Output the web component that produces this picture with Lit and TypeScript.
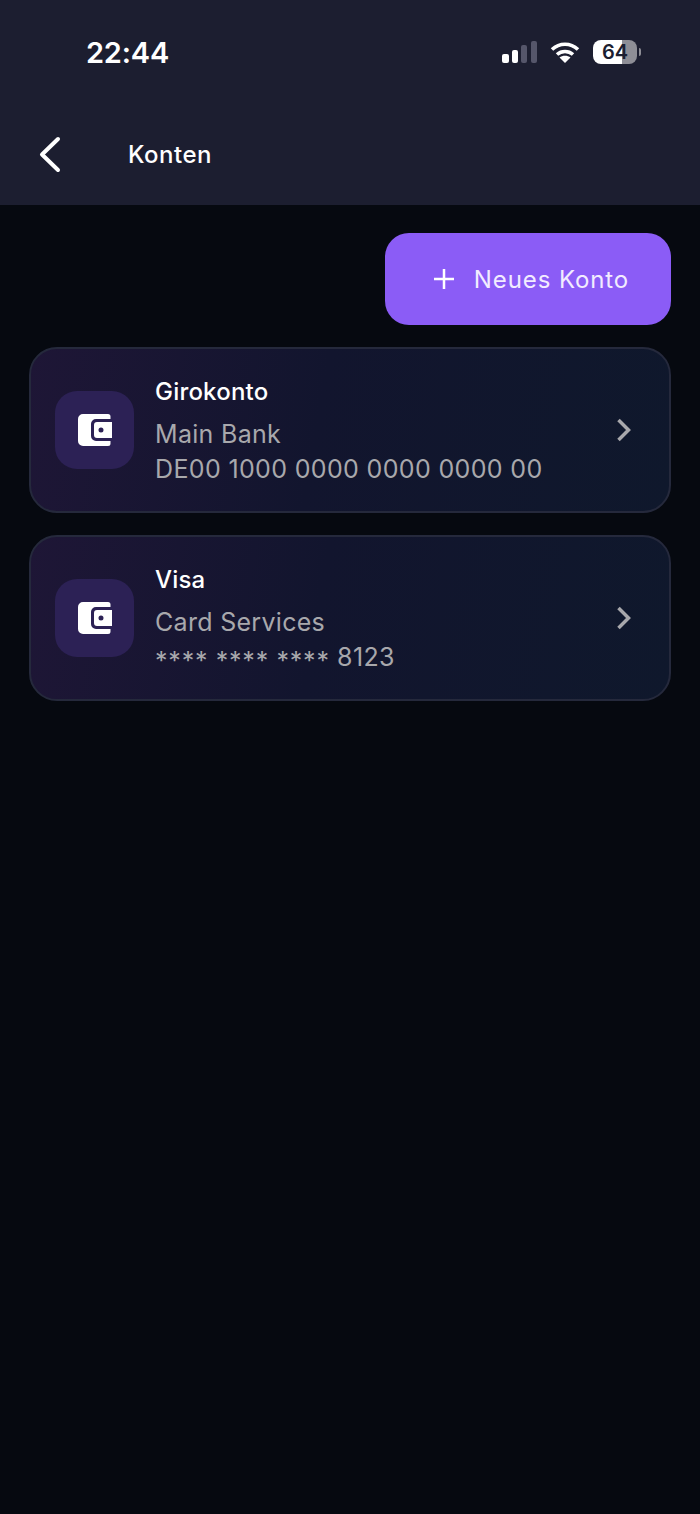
import { LitElement, html, css, svg } from 'lit';
import { customElement } from 'lit/decorators.js';

const accounts = [
  { name: 'Girokonto', bank: 'Main Bank', number: 'DE00 1000 0000 0000 0000 00' },
  { name: 'Visa', bank: 'Card Services', number: '**** **** **** 8123' },
];

const walletIcon = svg`
  <path fill="#fff" d="M5 0H30A2.500 2.500 0 0 1 32.500 2.500V5H18A5 5 0 0 0 13 10V22A5 5 0 0 0 18 27H32.500V29.500A2.500 2.500 0 0 1 30 32H5A5 5 0 0 1 0 27V5A5 5 0 0 1 5 0Z"/>
  <path fill="#fff" fill-rule="evenodd" d="M19 8H34V24H19A3 3 0 0 1 16 21V11A3 3 0 0 1 19 8ZM23 13.500A2.500 2.500 0 1 0 23 18.500A2.500 2.500 0 1 0 23 13.500Z"/>
`;

@customElement('app-root')
export class AppRoot extends LitElement {
  static styles = css`
    :host {
      display: block;
      min-height: 1514px;
      background: #060910;
      color: #fff;
      font-family: 'Inter', 'Liberation Sans', sans-serif;
    }

    .header {
      height: 205px;
      box-sizing: border-box;
      background: #1c1e30;
      display: flex;
      flex-direction: column;
    }

    .status {
      height: 104px;
      display: flex;
      align-items: center;
      justify-content: space-between;
      padding: 0 59px 0 86px;
    }

    .time {
      font-size: 29px;
      font-weight: 600;
      letter-spacing: -0.2px;
    }

    .status-icons {
      display: flex;
      align-items: center;
      gap: 13px;
    }

    .battery {
      display: flex;
      align-items: center;
      gap: 2px;
    }

    .battery-body {
      width: 44px;
      height: 24px;
      border-radius: 8px;
      background: linear-gradient(90deg, #fff 0 66%, #8e8e96 66% 100%);
      color: #1c1e30;
      font-size: 20px;
      font-weight: 600;
      display: flex;
      align-items: center;
      justify-content: center;
    }

    .battery-cap {
      width: 2px;
      height: 8px;
      border-radius: 0 2px 2px 0;
      background: #8e8e96;
    }

    .nav {
      flex: 1;
      display: flex;
      align-items: center;
      padding-left: 38px;
    }

    .nav h1 {
      margin: 0 0 0 66px;
      font-size: 24px;
      font-weight: 500;
      letter-spacing: 0.5px;
    }

    .content {
      padding: 28px 29px 0;
      display: flex;
      flex-direction: column;
      align-items: stretch;
      gap: 22px;
    }

    .new-btn {
      align-self: flex-end;
      width: 286px;
      height: 92px;
      box-sizing: border-box;
      border: 0;
      border-radius: 24px;
      padding: 0 0 0 7px;
      background: #8b5cf6;
      color: #f2ecff;
      display: flex;
      align-items: center;
      justify-content: center;
      gap: 20px;
      font: 400 24px 'Inter', 'Liberation Sans', sans-serif;
      letter-spacing: 0.9px;
    }

    .card {
      height: 166px;
      box-sizing: border-box;
      border: 2px solid #25293c;
      border-radius: 28px;
      background: linear-gradient(100deg, #1e1636 0%, #12152e 45%, #0f182c 100%);
      display: flex;
      align-items: center;
      padding: 0 37px 0 24px;
    }

    .icon-box {
      width: 79px;
      height: 78px;
      border-radius: 22px;
      background: #2c2155;
      display: flex;
      align-items: center;
      justify-content: center;
      flex: none;
    }

    .info {
      flex: 1;
      margin-left: 21px;
      display: flex;
      flex-direction: column;
    }

    .name {
      font-size: 24px;
      font-weight: 500;
      line-height: 30px;
      letter-spacing: 0.2px;
    }

    .bank {
      margin-top: 12px;
      font-size: 25px;
      line-height: 30px;
      color: #a8a8ac;
      letter-spacing: 0.3px;
    }

    .number {
      margin-top: 5px;
      font-size: 25px;
      line-height: 30px;
      color: #a8a8ac;
      letter-spacing: 0.35px;
      white-space: pre;
    }

    .stars {
      line-height: 0;
      vertical-align: -4px;
      letter-spacing: 0.8px;
    }
  `;

  // the masked digits sit lower than the plain asterisk glyph
  renderNumber(number: string) {
    return number
      .split(/(\*+)/)
      .map(part => (part.startsWith('*') ? html`<span class="stars">${part}</span>` : part));
  }

  render() {
    return html`
      <div class="header">
        <div class="status">
          <span class="time">22:44</span>
          <div class="status-icons">
            <svg width="36" height="24" viewBox="0 0 36 24">
              <rect x="1" y="14" width="7" height="9" rx="2" fill="#fff" />
              <rect x="11" y="10" width="6" height="13" rx="2" fill="#fff" />
              <rect x="20" y="5" width="6" height="18" rx="2" fill="#55566a" />
              <rect x="30" y="1" width="6" height="22" rx="2" fill="#55566a" />
            </svg>
            <svg width="30" height="24" viewBox="0 0 30 24" fill="none" stroke="#fff" stroke-width="3.600">
              <path d="M2 9.500C9.500 2.500 20.500 2.500 28 9.500" />
              <path d="M7 14.500C11.500 10.500 18.500 10.500 23 14.500" />
              <path d="M15 23L9.500 17.500C12.500 15 17.500 15 20.500 17.500Z" fill="#fff" stroke="none" />
            </svg>
            <div class="battery">
              <div class="battery-body">64</div>
              <div class="battery-cap"></div>
            </div>
          </div>
        </div>
        <div class="nav">
          <svg width="24" height="38" viewBox="0 0 24 38" fill="none" stroke="#fff" stroke-width="4" stroke-linecap="round" stroke-linejoin="round">
            <path d="M20 3L4 18.500L20 34" />
          </svg>
          <h1>Konten</h1>
        </div>
      </div>
      <div class="content">
        <button class="new-btn">
          <svg width="20" height="20" viewBox="0 0 20 20" stroke="#fff" stroke-width="2.500">
            <path d="M10 0V20M0 10H20" />
          </svg>
          <span>Neues Konto</span>
        </button>
        ${accounts.map(
          a => html`
            <div class="card">
              <div class="icon-box">
                <svg width="34" height="32" viewBox="0 0 34 32">${walletIcon}</svg>
              </div>
              <div class="info">
                <span class="name">${a.name}</span>
                <span class="bank">${a.bank}</span>
                <span class="number">${this.renderNumber(a.number)}</span>
              </div>
              <svg width="16" height="24" viewBox="0 0 16 24" fill="none" stroke="#a8a8ac" stroke-width="3.500">
                <path d="M2.500 2L12.500 12L2.500 22" />
              </svg>
            </div>
          `
        )}
      </div>
    `;
  }
}
